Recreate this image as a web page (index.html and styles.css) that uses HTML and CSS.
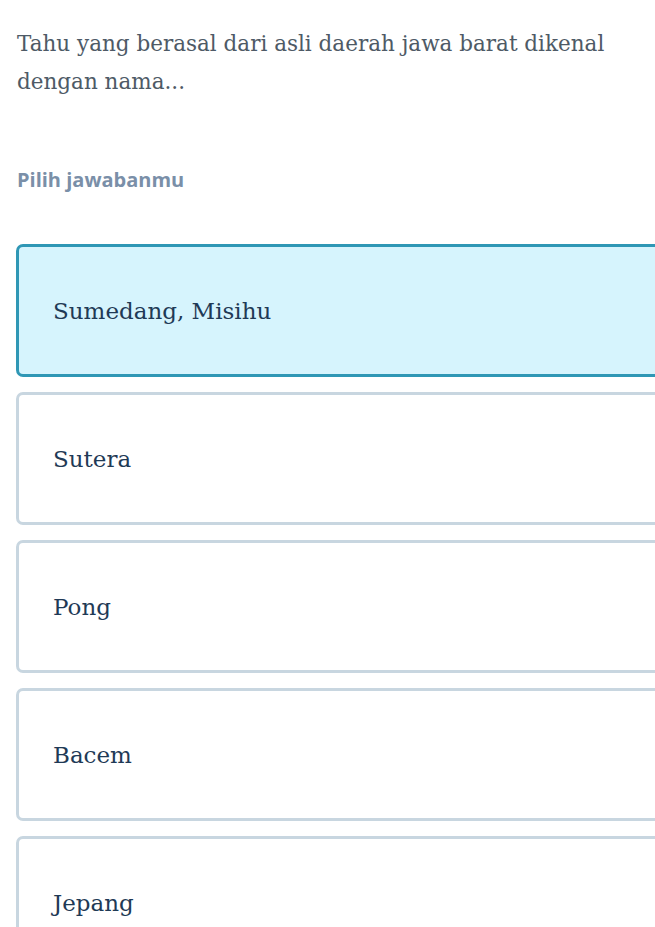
FILE: index.html
```
<!DOCTYPE html>
<html lang="id">
<head>
  <meta charset="UTF-8">
  <title>Kuis Tahu</title>
  <link rel="stylesheet" href="styles.css">
</head>
<body>

  <div class="quiz">
    <p class="question">Tahu yang berasal dari asli daerah jawa barat dikenal dengan nama...</p>
    <p class="prompt">Pilih jawabanmu</p>

    <div class="options">
      <div class="option selected">Sumedang, Misihu</div>
      <div class="option">Sutera</div>
      <div class="option">Pong</div>
      <div class="option">Bacem</div>
      <div class="option">Jepang</div>
    </div>
  </div>

</body>
</html>
```

FILE: styles.css
```
html, body {
  overflow: hidden;
}
body {
  margin: 0;
  background-color: #fff;
  font-family: "DejaVu Serif", "Liberation Serif", serif;
}
.quiz {
  padding: 25px 0 0 16px;
}
.question {
  margin: 0 0 0 1px;
  font-size: 21.5px;
  line-height: 38px;
  color: #4e5a66;
  width: 610px;
}
.prompt {
  margin: 67px 0 0 1px;
  font-family: "Open Sans", "Noto Sans", sans-serif;
  font-weight: 700;
  font-size: 20px;
  line-height: 24px;
  color: #7a8fa8;
}
.options {
  margin-top: 52px;
  margin-right: -40px;
  display: flex;
  flex-direction: column;
  gap: 15px;
}
.option {
  height: 127px;
  display: flex;
  align-items: center;
  padding-left: 34px;
  border: 3px solid #c8d6e0;
  border-radius: 7px;
  font-size: 23px;
  color: #1f3a56;
  background-color: #fff;
}
.option.selected {
  border-color: #2f97b5;
  background-color: #d6f4fd;
}
```
